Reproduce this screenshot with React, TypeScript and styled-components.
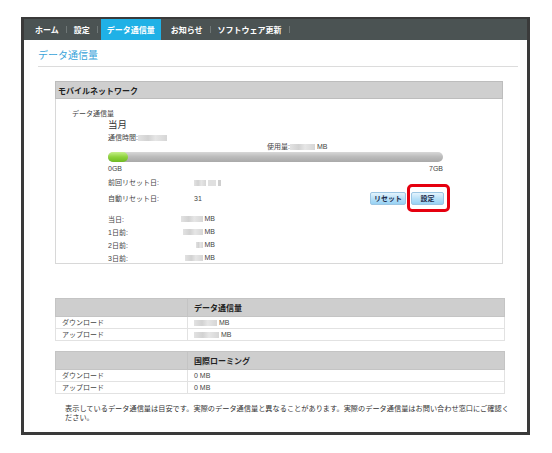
import React from "react";
import styled, { createGlobalStyle } from "styled-components";

const GlobalStyle = createGlobalStyle`
  html, body {
    margin: 0;
    padding: 0;
    background: #ffffff;
  }
  body {
    font-family: "Liberation Sans", "Noto Sans CJK JP", sans-serif;
    color: #333;
  }
`;

const Frame = styled.div`
  box-sizing: border-box;
  margin: 17px 0 0 21px;
  width: 509px;
  height: 418px;
  border: 3px solid #3a3a3a;
  border-top-width: 2px;
  background: #fff;
  display: flex;
  flex-direction: column;
`;

const Nav = styled.nav`
  height: 21px;
  background: #4b5353;
  display: flex;
  align-items: stretch;
  padding-left: 4px;
`;

const NavItem = styled.div<{ $active?: boolean }>`
  display: flex;
  align-items: center;
  padding: 0 ${(p) => (p.$active ? "6px" : "7px")};
  font-size: 8px;
  font-weight: bold;
  color: #fff;
  background: ${(p) => (p.$active ? "#1fb1e6" : "transparent")};
  margin: ${(p) => (p.$active ? "0 3px 0 3px" : "0")};
  white-space: nowrap;
`;

const NavSep = styled.span`
  align-self: center;
  width: 1px;
  height: 7px;
  background: #6f7777;
`;

const Content = styled.div`
  padding: 0 9px 0 14px;
  display: flex;
  flex-direction: column;
`;

const PageTitle = styled.h1`
  margin: 9px 0 0;
  padding-bottom: 3px;
  font-size: 10px;
  line-height: 14px;
  font-weight: normal;
  color: #3aa3d9;
  border-bottom: 1px solid #dcdcdc;
`;

const Section = styled.section`
  margin: 14px 0 0 17px;
  width: 448px;
`;

const SectionHead = styled.div`
  box-sizing: border-box;
  height: 18px;
  background: #cfcfcf;
  border: 1px solid #bdbdbd;
  display: flex;
  align-items: center;
  padding-left: 2px;
  font-size: 8px;
  font-weight: bold;
  color: #222;
`;

const SectionBody = styled.div`
  box-sizing: border-box;
  height: 165px;
  border: 1px solid #d8d8d8;
  border-top: none;
  padding: 10px 0 0 16px;
`;

const SmallLabel = styled.div`
  font-size: 7px;
  line-height: 10px;
  color: #444;
`;

const Usage = styled.div`
  margin-left: 36px;
  width: 335px;
  display: flex;
  flex-direction: column;
`;

const Month = styled.div`
  font-size: 9.5px;
  line-height: 12px;
  color: #333;
`;

const Line = styled.div<{ $top?: number; $indent?: number }>`
  display: flex;
  align-items: center;
  font-size: 7px;
  line-height: 10px;
  color: #444;
  margin-top: ${(p) => p.$top ?? 0}px;
  padding-left: ${(p) => p.$indent ?? 0}px;
`;

const Blur = styled.span<{ $w: number; $shade?: string }>`
  display: inline-block;
  width: ${(p) => p.$w}px;
  height: 6px;
  background: ${(p) =>
    p.$shade ??
    "linear-gradient(90deg, #e2e2e2 0%, #d2d2d2 35%, #e6e6e6 60%, #d6d6d6 100%)"};
  margin-right: 2px;
`;

const Bar = styled.div`
  height: 10px;
  border-radius: 5px;
  background: linear-gradient(180deg, #d8d8d8 0%, #bdbdbd 45%, #a9a9a9 100%);
  display: flex;
`;

const BarFill = styled.div`
  height: 10px;
  border-radius: 5px;
  background: linear-gradient(180deg, #c6f08a 0%, #8ed23c 50%, #6fbb24 100%);
`;

const Scale = styled.div`
  display: flex;
  justify-content: space-between;
  margin-top: 2px;
  font-size: 7px;
  line-height: 10px;
  color: #444;
`;

const InfoLabel = styled.span`
  width: 86px;
`;

const Spacer = styled.span`
  flex: 1;
`;

const Buttons = styled.div`
  display: flex;
  gap: 5px;
  margin-right: -1px;
`;

const Btn = styled.button<{ $w: number }>`
  position: relative;
  box-sizing: border-box;
  width: ${(p) => p.$w}px;
  height: 13px;
  padding: 0;
  border: 1px solid #9cc6e3;
  border-radius: 2px;
  background: linear-gradient(180deg, #e4f4fd 0%, #b9e1f8 50%, #98d2f4 100%);
  font-family: inherit;
  font-size: 7px;
  font-weight: bold;
  color: #1d2a4a;
  line-height: 11px;
`;

const Highlight = styled.span`
  position: absolute;
  left: -5px;
  top: -9px;
  width: 37px;
  height: 22px;
  border: 3px solid #e5000f;
  border-radius: 5px;
  pointer-events: none;
`;

const Daily = styled.div`
  margin-top: 7px;
  display: grid;
  grid-template-columns: 70px 37px;
  grid-auto-rows: 13px;
  align-items: center;
  font-size: 7px;
  color: #444;
`;

const DailyValue = styled.span`
  display: flex;
  justify-content: flex-end;
  align-items: center;
`;

const Table = styled.table<{ $top: number }>`
  margin: ${(p) => p.$top}px 0 0 17px;
  width: 450px;
  border-collapse: collapse;
  font-size: 7px;
  color: #444;
  th, td {
    border: 1px solid #e2e2e2;
    padding: 0 0 0 6px;
    text-align: left;
  }
  th {
    height: 17px;
    background: #cecece;
    border-color: #c4c4c4;
    font-size: 8px;
    font-weight: bold;
    color: #222;
  }
  td {
    height: 11px;
    line-height: 11px;
  }
  td:first-child,
  th:first-child {
    width: 125px;
  }
`;

const Cell = styled.span`
  display: flex;
  align-items: center;
`;

const Note = styled.p`
  margin: 10px 0 0 27px;
  font-size: 7.2px;
  line-height: 9px;
  color: #333;
`;

const navItems = ["ホーム", "設定", "データ通信量", "お知らせ", "ソフトウェア更新"];
const activeNav = "データ通信量";

const daily = [
  { label: "当日:", w: 22 },
  { label: "1日前:", w: 20 },
  { label: "2日前:", w: 7 },
  { label: "3日前:", w: 18 },
];

export default function App() {
  return (
    <>
      <GlobalStyle />
      <Frame>
        <Nav>
          {navItems.map((item, i) => (
            <React.Fragment key={item}>
              <NavItem $active={item === activeNav}>{item}</NavItem>
              {(item !== activeNav || i === navItems.length - 1) && <NavSep />}
            </React.Fragment>
          ))}
        </Nav>
        <Content>
          <PageTitle>データ通信量</PageTitle>

          <Section>
            <SectionHead>モバイルネットワーク</SectionHead>
            <SectionBody>
              <SmallLabel>データ通信量</SmallLabel>
              <Usage>
                <Month>当月</Month>
                <Line $top={2}>
                  通信時間:
                  <Blur $w={29} />
                </Line>
                <Line $top={-1} $indent={159}>
                  使用量:
                  <Blur $w={25} />
                  MB
                </Line>
                <Bar>
                  <BarFill style={{ width: `${(20 / 335) * 100}%` }} />
                </Bar>
                <Scale>
                  <span>0GB</span>
                  <span>7GB</span>
                </Scale>
                <Line $top={4}>
                  <InfoLabel>前回リセット日:</InfoLabel>
                  <Blur $w={12} />
                  <Blur $w={8} $shade="#e0e0e0" />
                  <Blur $w={3} $shade="#cfcfcf" />
                </Line>
                <Line $top={4}>
                  <InfoLabel>自動リセット日:</InfoLabel>
                  <span>31</span>
                  <Spacer />
                  <Buttons>
                    <Btn $w={36}>リセット</Btn>
                    <Btn $w={33}>
                      設定
                      <Highlight />
                    </Btn>
                  </Buttons>
                </Line>
                <Daily>
                  {daily.map((d) => (
                    <React.Fragment key={d.label}>
                      <span>{d.label}</span>
                      <DailyValue>
                        <Blur $w={d.w} />
                        MB
                      </DailyValue>
                    </React.Fragment>
                  ))}
                </Daily>
              </Usage>
            </SectionBody>
          </Section>

          <Table $top={34}>
            <thead>
              <tr>
                <th></th>
                <th>データ通信量</th>
              </tr>
            </thead>
            <tbody>
              <tr>
                <td>ダウンロード</td>
                <td>
                  <Cell>
                    <Blur $w={23} />
                    MB
                  </Cell>
                </td>
              </tr>
              <tr>
                <td>アップロード</td>
                <td>
                  <Cell>
                    <Blur $w={25} />
                    MB
                  </Cell>
                </td>
              </tr>
            </tbody>
          </Table>

          <Table $top={10}>
            <thead>
              <tr>
                <th></th>
                <th>国際ローミング</th>
              </tr>
            </thead>
            <tbody>
              <tr>
                <td>ダウンロード</td>
                <td>0 MB</td>
              </tr>
              <tr>
                <td>アップロード</td>
                <td>0 MB</td>
              </tr>
            </tbody>
          </Table>

          <Note>
            表示しているデータ通信量は目安です。実際のデータ通信量と異なることがあります。実際のデータ通信量はお問い合わせ窓口にご確認く
            <br />
            ださい。
          </Note>
        </Content>
      </Frame>
    </>
  );
}
